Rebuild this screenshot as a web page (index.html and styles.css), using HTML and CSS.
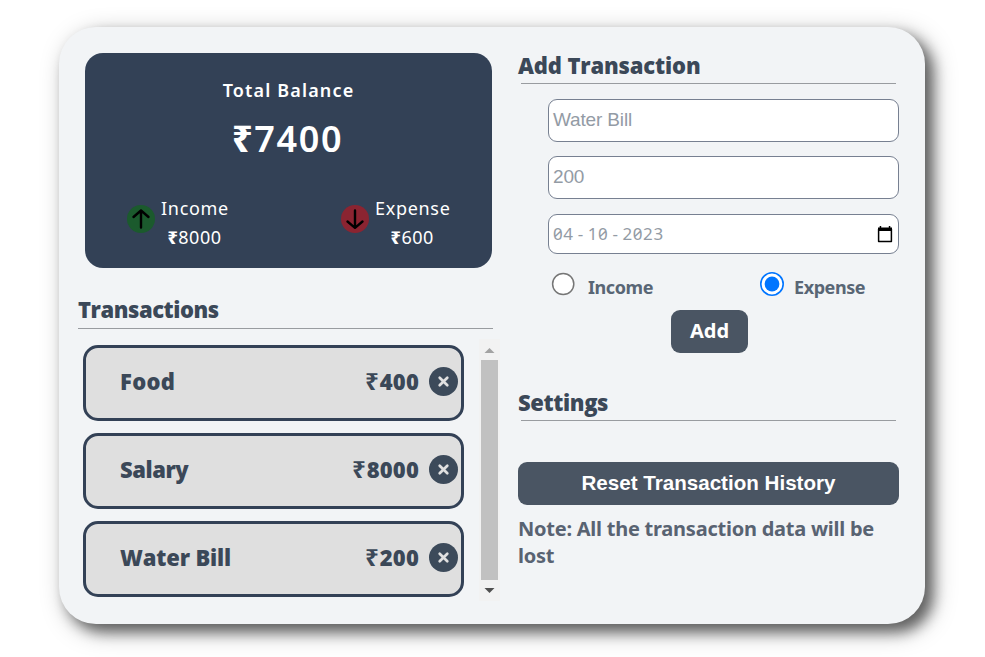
FILE: index.html
```html
<!DOCTYPE html>
<html lang="en">
<head>
<meta charset="utf-8">
<title>Expense Tracker</title>
<link rel="stylesheet" href="styles.css">
</head>
<body>
<main class="app">
  <section class="left">
    <div class="balance">
      <div class="balance-label"><span>Total Balance</span></div>
      <div class="balance-total"><span class="rupee">₹</span><span>7400</span></div>
      <div class="summary">
        <div class="stat">
          <svg class="stat-icon" viewBox="0 0 28 28"><circle cx="14" cy="14" r="14" fill="#1b5a2d"/><path d="M14 22.5V5.5M6.5 12L14 5.5L21.5 12" fill="none" stroke="#000" stroke-width="2.4" stroke-linecap="round" stroke-linejoin="round"/></svg>
          <div class="stat-text"><div>Income</div><div class="amount"><span class="rupee">₹</span>8000</div></div>
        </div>
        <div class="stat">
          <svg class="stat-icon" viewBox="0 0 28 28"><circle cx="14" cy="14" r="14" fill="#8b2431"/><path d="M14 5.5V22.5M6.5 16.5L14 22.8L21.5 16.5" fill="none" stroke="#000" stroke-width="2.4" stroke-linecap="round" stroke-linejoin="round"/></svg>
          <div class="stat-text"><div>Expense</div><div class="amount"><span class="rupee">₹</span>600</div></div>
        </div>
      </div>
    </div>
    <h2 class="title tx-title">Transactions</h2>
    <div class="rule tx-rule"></div>
    <div class="history">
      <ul class="list">
        <li class="item"><span class="name food">Food</span><span class="price"><span class="price-rupee">₹</span>400</span><svg class="close" viewBox="0 0 29 29"><circle cx="14.5" cy="14.5" r="14.5" fill="#3c4a5a"/><path d="M10.7 10.7L18.3 18.3M18.3 10.7L10.7 18.3" stroke="#e0e0e0" stroke-width="2.7" stroke-linecap="round"/></svg></li>
        <li class="item"><span class="name">Salary</span><span class="price"><span class="price-rupee">₹</span>8000</span><svg class="close" viewBox="0 0 29 29"><circle cx="14.5" cy="14.5" r="14.5" fill="#3c4a5a"/><path d="M10.7 10.7L18.3 18.3M18.3 10.7L10.7 18.3" stroke="#e0e0e0" stroke-width="2.7" stroke-linecap="round"/></svg></li>
        <li class="item"><span class="name bill">Water Bill</span><span class="price"><span class="price-rupee">₹</span>200</span><svg class="close" viewBox="0 0 29 29"><circle cx="14.5" cy="14.5" r="14.5" fill="#3c4a5a"/><path d="M10.7 10.7L18.3 18.3M18.3 10.7L10.7 18.3" stroke="#e0e0e0" stroke-width="2.7" stroke-linecap="round"/></svg></li>
      </ul>
      <div class="scrollbar">
        <svg class="arrow" viewBox="0 0 21 21"><path d="M5.5 14L10.5 9L15.5 14Z" fill="#a3a3a3"/></svg>
        <div class="thumb"></div>
        <svg class="arrow" viewBox="0 0 21 21"><path d="M5.5 8L10.5 13L15.5 8Z" fill="#505050"/></svg>
      </div>
    </div>
  </section>
  <section class="right">
    <h2 class="title add-title">Add Transaction</h2>
    <div class="rule"></div>
    <form class="form">
      <div class="field">Water Bill</div>
      <div class="field">200</div>
      <div class="field date"><span>04</span><span>-</span><span>10</span><span>-</span><span>2023</span>
        <svg class="calendar" viewBox="0 0 16 17"><path d="M1.6 3V15.4H14.4V3" fill="none" stroke="#000" stroke-width="1.5" stroke-linejoin="round"/><path d="M1 1.5H15V5H1ZM2.7 0H4.2V2H2.7ZM11.8 0H13.3V2H11.8Z"/></svg>
      </div>
      <div class="radios">
        <svg class="radio" viewBox="0 0 24 24"><circle cx="12.2" cy="12" r="10.6" fill="#fff" stroke="#767676" stroke-width="1.5"/></svg>
        <span class="radio-text">Income</span>
        <svg class="radio" viewBox="0 0 24 24"><circle cx="12" cy="12" r="11.2" fill="#fff" stroke="#0075ff" stroke-width="1.6"/><circle cx="12" cy="12" r="7.4" fill="#0075ff"/></svg>
        <span class="radio-text">Expense</span>
      </div>
      <button type="button" class="button add">Add</button>
    </form>
    <h2 class="title">Settings</h2>
    <div class="rule"></div>
    <button type="button" class="button reset">Reset Transaction History</button>
    <p class="note">Note: All the transaction data will be<br>lost</p>
  </section>
</main>
</body>
</html>
```
FILE: styles.css
```css
* { box-sizing: border-box; }
body { margin: 0; height: 657px; padding: 27px 0 0 59px; background: #fff; font-family: "Noto Sans", sans-serif; overflow: hidden; }
.app {
  width: 866px; height: 597px; display: flex;
  background: #f2f4f6; border-radius: 37px;
  box-shadow: 8px 8px 13px rgba(0,0,0,.48), 7px 7px 25px rgba(0,0,0,.34);
}
.left { width: 441px; padding: 26px 0 0 19px; }
.right { width: 400px; padding: 26px 0 0 18px; }
.balance { width: 407px; height: 215px; margin-left: 7px; padding-top: 23px; background: #334156; border-radius: 18px; color: #fff; }
.balance-label { height: 28px; line-height: 28px; text-align: center; font-size: 18px; font-weight: 600; letter-spacing: 1.15px; }
.balance-total { height: 50px; margin-top: 10px; padding-right: 2px; line-height: 50px; text-align: center; font-size: 36px; font-weight: 600; letter-spacing: 1.6px; }
.rupee { font-weight: 800; }
.summary { display: flex; gap: 112px; margin: 30px 0 0 42px; }
.stat { display: flex; gap: 6px; }
.stat-icon { width: 28px; height: 28px; margin-top: 11px; }
.stat-text { font-size: 18px; line-height: 29px; letter-spacing: .7px; text-align: center; white-space: nowrap; }
.amount { padding-right: 1px; letter-spacing: .5px; }
.title { margin: 0; height: 30px; font-family: "Open Sans", sans-serif; font-size: 22px; line-height: 24px; font-weight: 800; letter-spacing: -.38px; color: #3b4858; white-space: nowrap; }
.tx-title { margin-top: 30px; line-height: 22px; letter-spacing: -.45px; }
.add-title { letter-spacing: -.15px; }
.rule { width: 375px; height: 1px; margin-left: 3px; background: #999ca0; }
.tx-rule { width: 415px; margin: 0; }
.history { display: flex; height: 262px; margin-top: 10px; }
.list { width: 401px; margin: 0; padding: 6px 0 0 5px; list-style: none; display: flex; flex-direction: column; gap: 12px; }
.item { width: 381px; height: 76px; display: flex; align-items: center; border: 3px solid #334156; border-radius: 15px; background: #dfdfdf; padding: 0 3px 4px 34px; font-family: "Open Sans", sans-serif; font-size: 22px; line-height: 30px; font-weight: 800; letter-spacing: -.45px; color: #3b4858; }
.food { letter-spacing: .3px; }
.bill { letter-spacing: -.15px; }
.price { margin-left: auto; letter-spacing: .2px; }
.price-rupee { font-family: "Noto Sans", sans-serif; font-size: 24px; font-weight: 700; letter-spacing: 1px; }
.close { width: 29px; height: 29px; margin-left: 10px; }
.scrollbar { width: 21px; height: 262px; background: #f2f2f2; display: flex; flex-direction: column; align-items: center; }
.arrow { width: 21px; height: 21px; }
.thumb { width: 17px; height: 220px; background: #c1c1c1; }
.form { height: 306px; padding: 15px 0 0 30px; }
.field { width: 351px; height: 43px; margin-bottom: 14px; padding: 0 5px 2px 4px; display: flex; align-items: center; background: #fff; border: 1px solid #778091; border-radius: 9px; font-family: "Liberation Sans", sans-serif; font-size: 19px; letter-spacing: -.15px; color: #939ba5; }
.date { height: 40px; margin: 15px 0 0; padding-bottom: 2px; font-family: "Noto Sans", sans-serif; font-feature-settings: "zero"; font-size: 17px; letter-spacing: .6px; gap: 4px; }
.calendar { width: 16px; height: 17px; margin: 2px 0 0 auto; }
.radios { display: flex; height: 56px; padding: 18px 0 0 3px; }
.radio { width: 24px; height: 24px; flex: none; }
.radio-text { width: 185px; padding-left: 13px; font-size: 18px; line-height: 30px; font-weight: 700; letter-spacing: -.42px; color: #596675; }
.radio-text:last-child { width: auto; padding-left: 10px; }
.button { display: block; height: 43px; padding: 0 0 2px; border: 0; border-radius: 9px; background: #4a5563; color: #fff; font-weight: 700; font-size: 20px; font-family: "Noto Sans", sans-serif; }
.add { width: 77px; margin-left: 123px; }
.reset { width: 381px; margin: 41px 0 0; font-family: "Liberation Sans", sans-serif; font-size: 20.6px; }
.note { margin: 10px 0 0; font-size: 20px; line-height: 27px; font-weight: 700; letter-spacing: -.24px; color: #596372; white-space: nowrap; }
```
